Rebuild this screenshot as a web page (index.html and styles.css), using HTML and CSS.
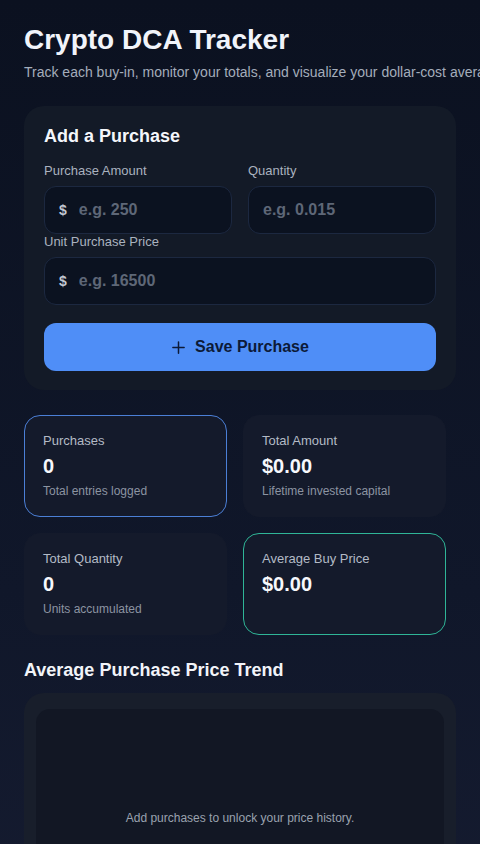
FILE: index.html
```html
<!DOCTYPE html>
<html lang="en">
<head>
<meta charset="utf-8">
<meta name="viewport" content="width=device-width, initial-scale=1">
<title>Crypto DCA Tracker</title>
<link rel="stylesheet" href="styles.css">
</head>
<body>
<main class="app">
  <header class="header">
    <h1 class="title">Crypto DCA Tracker</h1>
    <p class="subtitle">Track each buy-in, monitor your totals, and visualize your dollar-cost averaging journey.</p>
  </header>

  <section class="card form-card">
    <h2 class="card-title">Add a Purchase</h2>
    <div class="form-grid">
      <label class="field">
        <span class="field-label">Purchase Amount</span>
        <span class="input-wrap">
          <span class="prefix">$</span>
          <input class="input" type="text" placeholder="e.g. 250">
        </span>
      </label>
      <label class="field">
        <span class="field-label">Quantity</span>
        <span class="input-wrap">
          <input class="input" type="text" placeholder="e.g. 0.015">
        </span>
      </label>
      <label class="field field-full">
        <span class="field-label">Unit Purchase Price</span>
        <span class="input-wrap">
          <span class="prefix">$</span>
          <input class="input" type="text" placeholder="e.g. 16500">
        </span>
      </label>
    </div>
    <button class="btn-primary" type="button">
      <svg class="btn-icon" viewBox="0 0 16 16" width="16" height="16" aria-hidden="true">
        <path d="M8 2v12M2 8h12" stroke="currentColor" stroke-width="1.6" fill="none" stroke-linecap="round"/>
      </svg>
      <span>Save Purchase</span>
    </button>
  </section>

  <section class="stats-grid">
    <div class="stat stat-blue">
      <div class="stat-label">Purchases</div>
      <div class="stat-value">0</div>
      <div class="stat-sub">Total entries logged</div>
    </div>
    <div class="stat">
      <div class="stat-label">Total Amount</div>
      <div class="stat-value">$0.00</div>
      <div class="stat-sub">Lifetime invested capital</div>
    </div>
    <div class="stat">
      <div class="stat-label">Total Quantity</div>
      <div class="stat-value">0</div>
      <div class="stat-sub">Units accumulated</div>
    </div>
    <div class="stat stat-teal">
      <div class="stat-label">Average Buy Price</div>
      <div class="stat-value">$0.00</div>
    </div>
  </section>

  <section class="chart-section">
    <h2 class="section-title">Average Purchase Price Trend</h2>
    <div class="chart-card">
      <div class="chart-inner">
        <p class="chart-empty">Add purchases to unlock your price history.</p>
      </div>
    </div>
  </section>
</main>
</body>
</html>
```

FILE: styles.css
```css
* { box-sizing: border-box; }

html {
  background: linear-gradient(180deg, #0b1120 0%, #10172a 60%, #161c31 100%);
  min-height: 100%;
}

body {
  margin: 0;
  font-family: "Liberation Sans", Arial, sans-serif;
  color: #eef2f8;
  overflow-x: hidden;
}

.app {
  padding: 24px 24px 40px;
  overflow: hidden;
}

.header { margin: 0; }

.title {
  margin: 0;
  font-size: 28px;
  line-height: 32px;
  font-weight: 700;
  color: #f1f4fa;
}

.subtitle {
  margin: 6px 0 0;
  font-size: 14px;
  line-height: 20px;
  color: #a4adbb;
  white-space: nowrap;
}

.card {
  background: #131a27;
  border-radius: 20px;
}

.form-card {
  margin-top: 24px;
  padding: 18px 20px 19px;
}

.card-title {
  margin: 0;
  font-size: 18px;
  line-height: 24px;
  font-weight: 700;
  color: #f4f6fb;
}

.form-grid {
  margin-top: 15px;
  display: grid;
  grid-template-columns: minmax(0, 1fr) minmax(0, 1fr);
  column-gap: 16px;
}

.field {
  display: flex;
  flex-direction: column;
  gap: 7px;
  min-width: 0;
}

.field-full { grid-column: 1 / -1; }

.field-label {
  font-size: 13px;
  line-height: 16px;
  color: #aab2bf;
}

.input-wrap {
  display: flex;
  align-items: center;
  height: 48px;
  padding: 0 14px;
  background: #0b1220;
  border: 1px solid #1c2840;
  border-radius: 12px;
}

.prefix {
  font-size: 14px;
  font-weight: 700;
  color: #c2c8d2;
  margin-right: 12px;
}

.input {
  flex: 1;
  width: 100%;
  min-width: 0;
  border: 0;
  outline: 0;
  background: transparent;
  font-family: inherit;
  font-size: 16px;
  font-weight: 700;
  color: #e5e9f0;
  padding: 0;
}

.input::placeholder { color: #5e6777; }

.btn-primary {
  margin-top: 18px;
  width: 100%;
  height: 48px;
  border: 0;
  border-radius: 12px;
  background: #4f8ef7;
  color: #0c1a38;
  font-family: inherit;
  font-size: 16px;
  font-weight: 700;
  display: flex;
  align-items: center;
  justify-content: center;
  gap: 9px;
}

.btn-icon { width: 15px; height: 15px; }

.stats-grid {
  margin-top: 25px;
  display: grid;
  grid-template-columns: 203px 203px;
  gap: 16px;
}

.stat {
  background: #141a2b;
  border: 1px solid #141a2b;
  border-radius: 16px;
  padding: 16px 18px 17px;
}

.stat-blue { border-color: #4b7fd6; }
.stat-teal { border-color: #2fb597; }

.stat-label {
  font-size: 13px;
  line-height: 18px;
  color: #b3bac6;
}

.stat-value {
  margin-top: 4px;
  font-size: 20px;
  line-height: 24px;
  font-weight: 700;
  color: #f6f8fc;
}

.stat-sub {
  margin-top: 5px;
  font-size: 12px;
  line-height: 16px;
  color: #8c94a2;
}

.chart-section { margin-top: 23px; }

.section-title {
  margin: 0;
  font-size: 18px;
  line-height: 24px;
  font-weight: 700;
  color: #f2f4f9;
}

.chart-card {
  margin-top: 11px;
  background: #181e2b;
  border-radius: 20px;
  padding: 16px 12px;
}

.chart-inner {
  background: #121724;
  border-radius: 14px;
  height: 218px;
  display: flex;
  align-items: center;
  justify-content: center;
}

.chart-empty {
  margin: 0;
  font-size: 12px;
  line-height: 16px;
  color: #9aa2af;
}
```
